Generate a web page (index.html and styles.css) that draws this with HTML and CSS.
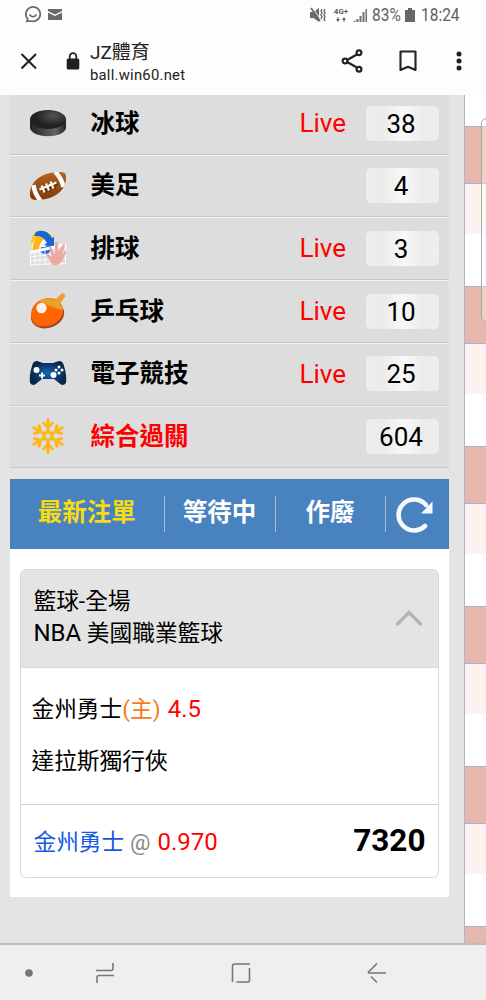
FILE: index.html
```html
<!DOCTYPE html>
<html lang="zh-Hant">
<head>
<meta charset="utf-8">
<title>JZ體育</title>
<link rel="stylesheet" href="styles.css">
</head>
<body>
<div class="phone">
  <header class="status">
    <svg class="status-left" width="40" height="20" viewBox="0 0 40 20">
      <g fill="none" stroke="#696969" stroke-width="1.7"><path d="M3.800 15A7.200 7.200 0 1 1 7 17L2.800 17.300Z"/><path d="M5.500 10.500Q9 15 12.500 10.500"/></g>
      <path d="M24 5h14v2l-7 3.500L24 7zM24 8.500l7 3.500 7-3.500V16H24z" fill="#696969"/>
    </svg>
    <div class="status-right">
      <svg width="16" height="16" viewBox="0 0 16 16"><path d="M0 5h3.500L9 1v14l-5.500-4H0z" fill="#6b6b6b"/><path d="M2 0l9 13" stroke="#fff" stroke-width="1"/><path d="M1 1l9 13" stroke="#6b6b6b" stroke-width="1.800"/><path d="M12 2l-1 2 1 2-1 2 1 2-1 2M15 2l-1 2 1 2-1 2 1 2-1 2 1 2" fill="none" stroke="#6b6b6b" stroke-width="1.400"/></svg>
      <span class="network"><b>4G+</b><svg width="10" height="5" viewBox="0 0 10 5"><path d="M0 2h1.500V0h1V2H4L2 5zM6 3l2-3 2 3H8.500v2h-1V3z" fill="#666"/></svg></span>
      <svg width="15" height="14" viewBox="0 0 15 14"><path d="M0 14l2.500-2v2zM3.500 11h2v3h-2zM6.500 8h2v6h-2zM9.500 4h2v10h-2zM12.500 1h1.500v13h-1.500z" fill="#737373"/></svg>
      <span class="pct">83%</span>
      <svg class="battery" width="10" height="14" viewBox="0 0 10 14"><path d="M3 0h4v2h3v12H0V2h3z" fill="#666"/></svg>
      <span class="time">18:24</span>
    </div>
  </header>
  <div class="browser">
    <svg class="close" width="18" height="18" viewBox="0 0 18 18"><path d="M1.500 2L16 16.500M16 2L1.500 16.500" stroke="#222" stroke-width="2.100"/></svg>
    <svg class="lock" width="14" height="18" viewBox="0 0 14 18"><rect x=".7" y="6.500" width="12.600" height="11" rx="1.500" fill="#202020"/><path d="M3.700 7V4.500a3.300 3.300 0 0 1 6.600 0V7" fill="none" stroke="#202020" stroke-width="1.700"/></svg>
    <div class="site"><div class="site-name">JZ體育</div><div class="site-url">ball.win60.net</div></div>
    <svg class="share" width="23" height="24" viewBox="0 0 23 24"><g fill="none" stroke="#222" stroke-width="2.200"><path d="M6.500 10.700l9-5M6.500 13.300l9 5"/><circle cx="4" cy="12" r="2.400"/><circle cx="18" cy="3.800" r="2.400"/><circle cx="18" cy="20.200" r="2.400"/></g></svg>
    <svg class="bookmark" width="18" height="22" viewBox="0 0 18 22"><path d="M1.500 1.500h15V20L9 16.800 1.500 20z" fill="none" stroke="#222" stroke-width="2.100" stroke-linejoin="round"/></svg>
    <svg class="more" width="6" height="20" viewBox="0 0 6 20"><g fill="#202020"><circle cx="3" cy="3" r="2.500"/><circle cx="3" cy="10" r="2.500"/><circle cx="3" cy="17" r="2.500"/></g></svg>
  </div>
  <div class="page">
    <main class="panel">
      <ul class="sports">
        <li class="sport">
          <svg class="icon" width="40" height="40" viewBox="0 0 40 40"><defs><linearGradient id="puck" x1="0" x2="1"><stop offset="0" stop-color="#222"/><stop offset=".7" stop-color="#666"/><stop offset="1" stop-color="#222"/></linearGradient><radialGradient id="puckTop" cx=".65" cy=".3"><stop offset="0" stop-color="#555"/><stop offset="1" stop-color="#202122"/></radialGradient></defs><path d="M2 16v9c2 11 34 11 36 0v-9z" fill="url(#puck)"/><ellipse cx="20" cy="16.500" rx="18" ry="9.500" fill="url(#puckTop)"/></svg>
          <span class="name">冰球</span><span class="live">Live</span><span class="count">38</span>
        </li>
        <li class="sport">
          <svg class="icon" width="40" height="40" viewBox="0 0 40 40"><defs><linearGradient id="leather" x1="0" y1="0" x2="0" y2="1"><stop offset="0" stop-color="#c06d27"/><stop offset="1" stop-color="#753000"/></linearGradient><clipPath id="ballClip"><path d="M2 30C1 16 13 6 32 6q6 0 6 4C39 24 27 34 8 34q-5 0-6-4z"/></clipPath></defs><g clip-path="url(#ballClip)"><path d="M0 0h40v40H0z" fill="url(#leather)"/><path d="M5.500 19q1 9 8 17M26.500 5q7 7 9 16" fill="none" stroke="#fff" stroke-width="4.500"/></g><path d="M12 23.500l17-7M14 20l3 6M18.500 18l3 6.500M23 15.500l3 6.500" stroke="#713408" stroke-width="3" transform="translate(1 1)"/><path d="M11.500 23.500l17-7M13.500 19.500l3 7M18 17.500l3 7M22.500 15.500l3 7" stroke="#fff" stroke-width="2"/></svg>
          <span class="name">美足</span><span class="count">4</span>
        </li>
        <li class="sport">
          <svg class="icon" width="40" height="40" viewBox="0 0 40 40"><circle cx="14.500" cy="14" r="11.500" fill="#f3f4f6"/><path d="M3 17Q2 6 10 3q9-2 15 6l-3 3Q12 2 3 17z" fill="#ffc424"/><path d="M8 4q10-4 16 6l2-1v10l-10-2 3-2Q15 7 6 8z" fill="#1765d2"/><path d="M5 22Q4 12 11 8l5 3q-5 4-5 11z" fill="#ffb515"/><path d="M12 24q10 6 14-7l-5-2q-2 5-8 4z" fill="#2264dc"/><g fill="none" stroke="#fff"><path d="M2 24.500l36-8" stroke-width="3"/><path d="M2.500 26v11M7 25v12M12 24v13M17 23v14M22 23v14M27 22v15M32 21v16M37.500 18v18M2 29l36-5M2 33l36-3M2 37l36-2" stroke-width=".9"/></g><path d="M24 37l-6-11q2-1 6 3l-3-10q2-2 4 4l2 3v-11q1-2 3 0v9l5-8q2-1 2 1l-3 9 3-3q2 0 1 2-4 11-9 12z" fill="#ecaaa0"/></svg>
          <span class="name">排球</span><span class="live">Live</span><span class="count">3</span>
        </li>
        <li class="sport">
          <svg class="icon" width="40" height="40" viewBox="0 0 40 40"><ellipse cx="19.500" cy="24" rx="17" ry="13" transform="rotate(-18 19.500 24)" fill="#a74420"/><path d="M3 26Q2 13 15 8q17-4 20 10 1 10-11 16Q6 39 3 26z" fill="#ff6505"/><path d="M11 10Q18 5 27 9l6-6q3-2 4 1 1 2-1 3l-4 6q3 3 3 6-11-2-24-9z" fill="#e8a12b"/><circle cx="13.500" cy="17" r="5.200" fill="#fff0e8"/></svg>
          <span class="name">乒乓球</span><span class="live">Live</span><span class="count">10</span>
        </li>
        <li class="sport">
          <svg class="icon" width="40" height="40" viewBox="0 0 40 40"><defs><radialGradient id="pad"><stop offset="0" stop-color="#1768af"/><stop offset=".55" stop-color="#0a407b"/><stop offset="1" stop-color="#092747"/></radialGradient></defs><path d="M9 7l6 2h10l6-2q4 0 5 5 3 9 2 17-3 4-7 0l-5-4H14l-5 4q-4 4-7 0-1-8 2-17 1-5 5-5z" fill="url(#pad)"/><circle cx="8.500" cy="16" r="3" fill="#fff"/><circle cx="25.500" cy="21" r="3" fill="#fff"/><path d="M14 18.500v6M11 21.500h6" stroke="#fff" stroke-width="2"/><g fill="#fff"><circle cx="31" cy="13" r="1.500"/><circle cx="31" cy="19" r="1.500"/><circle cx="28" cy="16" r="1.500"/><circle cx="34" cy="16" r="1.500"/></g></svg>
          <span class="name">電子競技</span><span class="live">Live</span><span class="count">25</span>
        </li>
        <li class="sport combo">
          <svg class="icon" width="40" height="40" viewBox="0 0 40 40"><defs><path id="arm" d="M20 16V3.500M15.500 7L20 11.500 24.500 7"/></defs><g fill="none" stroke="#ffb719" stroke-width="3" stroke-linecap="round"><circle cx="20" cy="20" r="4"/><use href="#arm"/><use href="#arm" transform="rotate(60 20 20)"/><use href="#arm" transform="rotate(120 20 20)"/><use href="#arm" transform="rotate(180 20 20)"/><use href="#arm" transform="rotate(240 20 20)"/><use href="#arm" transform="rotate(300 20 20)"/></g></svg>
          <span class="name">綜合過關</span><span class="count">604</span>
        </li>
      </ul>
      <section class="bets">
        <nav class="tabs">
          <span class="tab active">最新注單</span><span class="tab waiting">等待中</span><span class="tab void">作廢</span>
          <span class="refresh"><svg width="40" height="40" viewBox="0 0 40 40"><path d="M30 32A15.500 15.500 0 1 1 31 11" fill="none" stroke="#f6fbff" stroke-width="4.600" stroke-linecap="round"/><path d="M37.500 7.500v12H26z" fill="#f6fbff"/></svg></span>
        </nav>
        <article class="ticket">
          <div class="ticket-head"><div>籃球-全場<br><span class="latin">NBA</span> 美國職業籃球</div><svg width="28" height="18" viewBox="0 0 28 18"><path d="M2.500 15L14 3.500 25.500 15" fill="none" stroke="#b5b5b5" stroke-width="3.500" stroke-linecap="round"/></svg></div>
          <div class="match"><div>金州勇士<span class="home">(主)</span> <span class="red latin">4.5</span></div><div>達拉斯獨行俠</div></div>
          <div class="result"><span><span class="pick">金州勇士</span> <span class="at">@</span> <span class="red latin">0.970</span></span><strong>7320</strong></div>
        </article>
      </section>
    </main>
    <aside class="grid">
      <i class="plain"></i>
      <i class="head"></i><i class="tint"></i><i class="plain"></i>
      <i class="head"></i><i class="tint"></i><i class="plain"></i>
      <i class="head"></i><i class="tint"></i><i class="plain"></i>
      <i class="head"></i><i class="tint"></i><i class="plain"></i>
      <i class="head"></i><i class="tint"></i><i class="plain"></i>
      <i class="head"></i>
    </aside>
    <div class="floating"></div>
  </div>
  <footer class="navbar">
    <svg width="8" height="8" viewBox="0 0 8 8"><circle cx="4" cy="4" r="3.800" fill="#777"/></svg>
    <svg class="recent" width="20" height="22" viewBox="0 0 20 22"><path d="M1 8.500h15q2 0 2-2V1M19 13.500H4q-2 0-2 2V21" fill="none" stroke="#777" stroke-width="1.600"/></svg>
    <svg class="home-key" width="20" height="20" viewBox="0 0 20 20"><path d="M1.500 19V3q0-2 2-2H19M18.500 5v12q0 2-2 2H5.500" fill="none" stroke="#777" stroke-width="1.600"/></svg>
    <svg class="back" width="20" height="20" viewBox="0 0 20 20"><path d="M10 .5L1.500 9q-.5 1 1 1H19M4 13.500l6 6" fill="none" stroke="#777" stroke-width="1.600"/></svg>
  </footer>
</div>
</body>
</html>
```
FILE: styles.css
```css
* { box-sizing: border-box; }
body { margin: 0; font-family: Roboto, "Noto Sans CJK TC", sans-serif; color: #000; }
svg { display: block; flex: none; }
.phone { width: 486px; height: 1000px; overflow: hidden; display: flex; flex-direction: column; background: #fdfdfd; }
.status { height: 30px; flex: none; display: flex; justify-content: space-between; padding: 4px 28px 0 24px; color: #626262; }
.status-right { display: flex; height: 21px; align-items: center; font-size: 18px; white-space: nowrap; }
.network { width: 16px; margin: 0 4px 0 7px; display: flex; flex-direction: column; align-items: center; gap: 1px; font-size: 8px; line-height: 8px; }
.pct, .time { display: inline-block; transform: scaleX(.86); transform-origin: left; }
.pct { width: 28px; margin-left: 4px; }
.battery { margin: 0 6px 0 5px; }
.time { width: 37px; }
.browser { height: 65px; flex: none; display: flex; align-items: center; padding: 0 24px 3px 20px; }
.lock { margin-left: 28px; }
.site { margin-left: 10px; width: 252px; padding-top: 5px; color: #222; }
.site-name { font-size: 19px; line-height: 23px; }
.site-url { font-size: 14.800px; line-height: 22px; letter-spacing: .25px; }
.bookmark { margin-left: 35px; }
.more { margin-left: 39px; }
.page { height: 848px; flex: none; position: relative; display: flex; background: #e4e4e4; }
.panel { width: 464px; flex: none; padding: 0 15px 0 10px; }
.sports { list-style: none; margin: 0; padding: 0; background: #ddd; }
.sport { height: 62.700px; display: flex; align-items: center; padding: 0 10px 1px 18px; border-top: 1px solid #f2f2f2; border-bottom: 1px solid #c8c8c8; }
.sport:first-child { height: 59.800px; padding-bottom: 2px; border-top: 0; }
.name { margin-left: 22.500px; padding-top: 1px; font-size: 24.500px; line-height: 34px; font-weight: 700; }
.live { margin-left: auto; margin-right: 20px; color: #f00; font-size: 26px; }
.count { width: 73px; height: 35px; flex: none; border-radius: 5px; background: linear-gradient(90deg, #eee, #ebebeb 22%, #f8f8f8 52%, #ebebeb 80%, #efefef); font-size: 26px; line-height: 36px; text-align: center; padding-right: 3px; }
.name + .count { margin-left: auto; }
.combo .name { color: #f00; }
.bets { margin-top: 10.500px; height: 418px; background: #fff; }
.tabs { height: 70px; display: flex; align-items: center; background: #4882bf; color: #fff; font-size: 24.500px; font-weight: 700; }
.tab { height: 36px; line-height: 34px; border-right: 1.500px solid #a9bfd7; text-align: center; white-space: nowrap; }
.active { width: 154.500px; color: #f7dc10; }
.waiting { width: 111px; }
.void { width: 110px; }
.refresh { margin-left: 9.500px; }
.ticket { margin: 20px 10px 0; height: 309px; border: 1px solid #d8d8d8; border-radius: 6px; overflow: hidden; }
.ticket-head { height: 98px; padding: 0 15px 0 12.500px; display: flex; justify-content: space-between; align-items: center; background: #e4e4e4; border-bottom: 1px solid #d8d8d8; font-size: 22.700px; line-height: 32px; }
.latin { font-size: 24px; line-height: 1; }
.red.latin { margin-left: 1.500px; }
.match { height: 137px; padding: 16px 10.500px 0; border-bottom: 1px solid #d0d0d0; font-size: 22.700px; line-height: 52px; }
.home { color: #fb7817; }
.red { color: #f00; }
.result { height: 72px; display: flex; align-items: center; justify-content: space-between; padding: 0 12.500px; font-size: 22.700px; }
.pick { color: #1558e3; }
.at { color: #888; }
.result strong { font-size: 31.500px; }
.grid { width: 22px; flex: none; overflow: hidden; border-left: 1px solid #b4b3ce; display: flex; flex-direction: column; }
.grid i { flex: none; display: block; }
.plain { height: 52px; background: #fff; }
.plain:first-child { height: 31px; }
.head { height: 58px; background: #e4b8ad; border-top: 1px solid #b0add0; border-bottom: 1px solid #b0add0; }
.tint { height: 50px; background: #fcf3f1; }
.floating { position: absolute; top: 23px; right: -6px; width: 11px; height: 204px; border: 1px solid #aaa; border-radius: 5px; background: rgba(255,255,255,.35); }
.navbar { height: 57px; flex: none; display: flex; align-items: center; padding: 0 0 0 25px; background: #efefef; border-top: 2px solid #bdbdbd; }
.recent { margin-left: 62px; }
.home-key { margin-left: 116px; }
.back { margin-left: 116px; }
```
